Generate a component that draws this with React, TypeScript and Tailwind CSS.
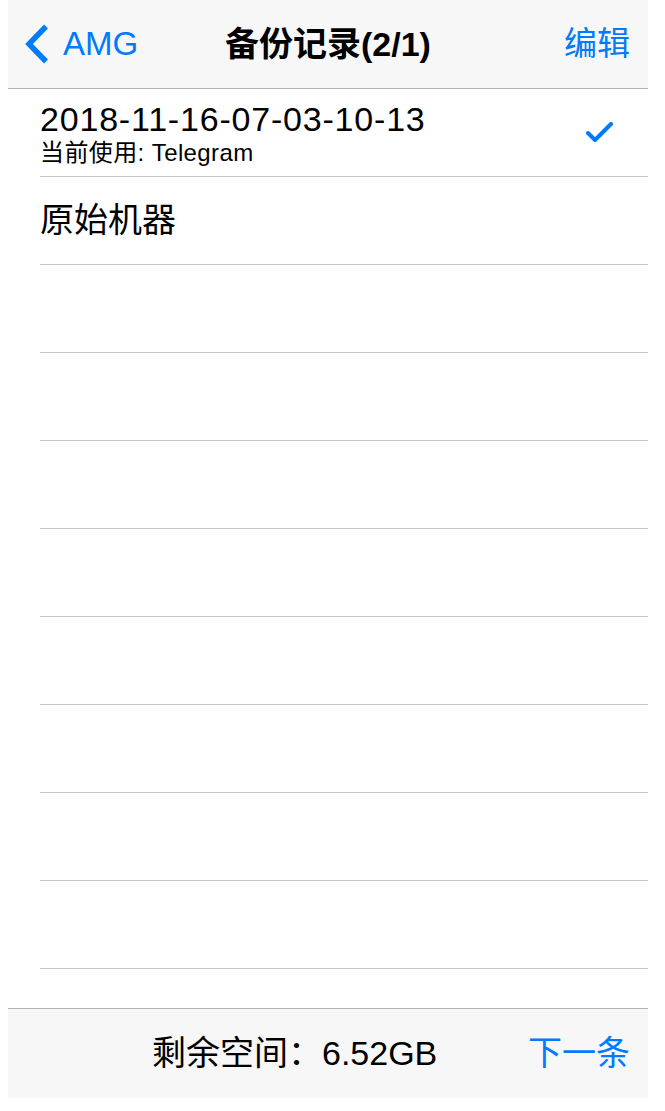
import React from 'react';

const font = { fontFamily: '"Liberation Sans", "Noto Sans CJK SC", sans-serif' };

const BackIcon = () => (
  <svg width="27" height="40" viewBox="0 0 27 40" className="shrink-0">
    <polyline points="22,2.5 5,20 22,37.5" fill="none" stroke="#007aff" strokeWidth="5.5" strokeLinejoin="miter" />
  </svg>
);

const CheckIcon = () => (
  <svg width="28" height="22" viewBox="0 0 28 22">
    <polyline points="2,11 9,18 25,2" fill="none" stroke="#007aff" strokeWidth="4" strokeLinecap="round" strokeLinejoin="round" />
  </svg>
);

const App = () => {
  // 空行占位
  const blankRows = Array.from({ length: 8 });
  return (
    <div className="w-[665px] h-[1111px] bg-white text-black" style={font}>
      <div className="ml-2 w-[640px]">
        <div className="h-[89px] bg-[#f7f7f7] border-b border-[#b2b2b2] flex items-center relative">
          <div className="flex items-center pl-[16px] gap-[12px] text-[#007aff] text-[33px]">
            <BackIcon />
            <span>AMG</span>
          </div>
          <div className="absolute left-0 right-0 text-center font-bold text-[34px] pointer-events-none">备份记录(2/1)</div>
          <span className="ml-auto pr-[18px] text-[#007aff] text-[33px]">编辑</span>
        </div>
        <div className="h-[919px] overflow-hidden">
          <div className="ml-8 h-[88px] border-b border-[#c8c7cc] flex items-center pr-[34px]">
            <div className="flex flex-col">
              <span className="text-[34px] leading-[40px] tracking-[0.8px]">2018-11-16-07-03-10-13</span>
              <span className="text-[24px] leading-[28px] tracking-[0.4px]">当前使用: Telegram</span>
            </div>
            <div className="ml-auto">
              <CheckIcon />
            </div>
          </div>
          <div className="ml-8 h-[88px] border-b border-[#c8c7cc] flex items-center">
            <span className="text-[34px]">原始机器</span>
          </div>
          {blankRows.map((_, i) => (
            <div key={i} className="ml-8 h-[88px] border-b border-[#c8c7cc]" />
          ))}
        </div>
        <div className="h-[90px] bg-[#f7f7f7] border-t border-[#b2b2b2] flex items-center text-[34px]">
          <span className="pl-[144px]">剩余空间：6.52GB</span>
          <span className="ml-auto pr-[18px] text-[#007aff]">下一条</span>
        </div>
      </div>
    </div>
  );
};

export default App;
